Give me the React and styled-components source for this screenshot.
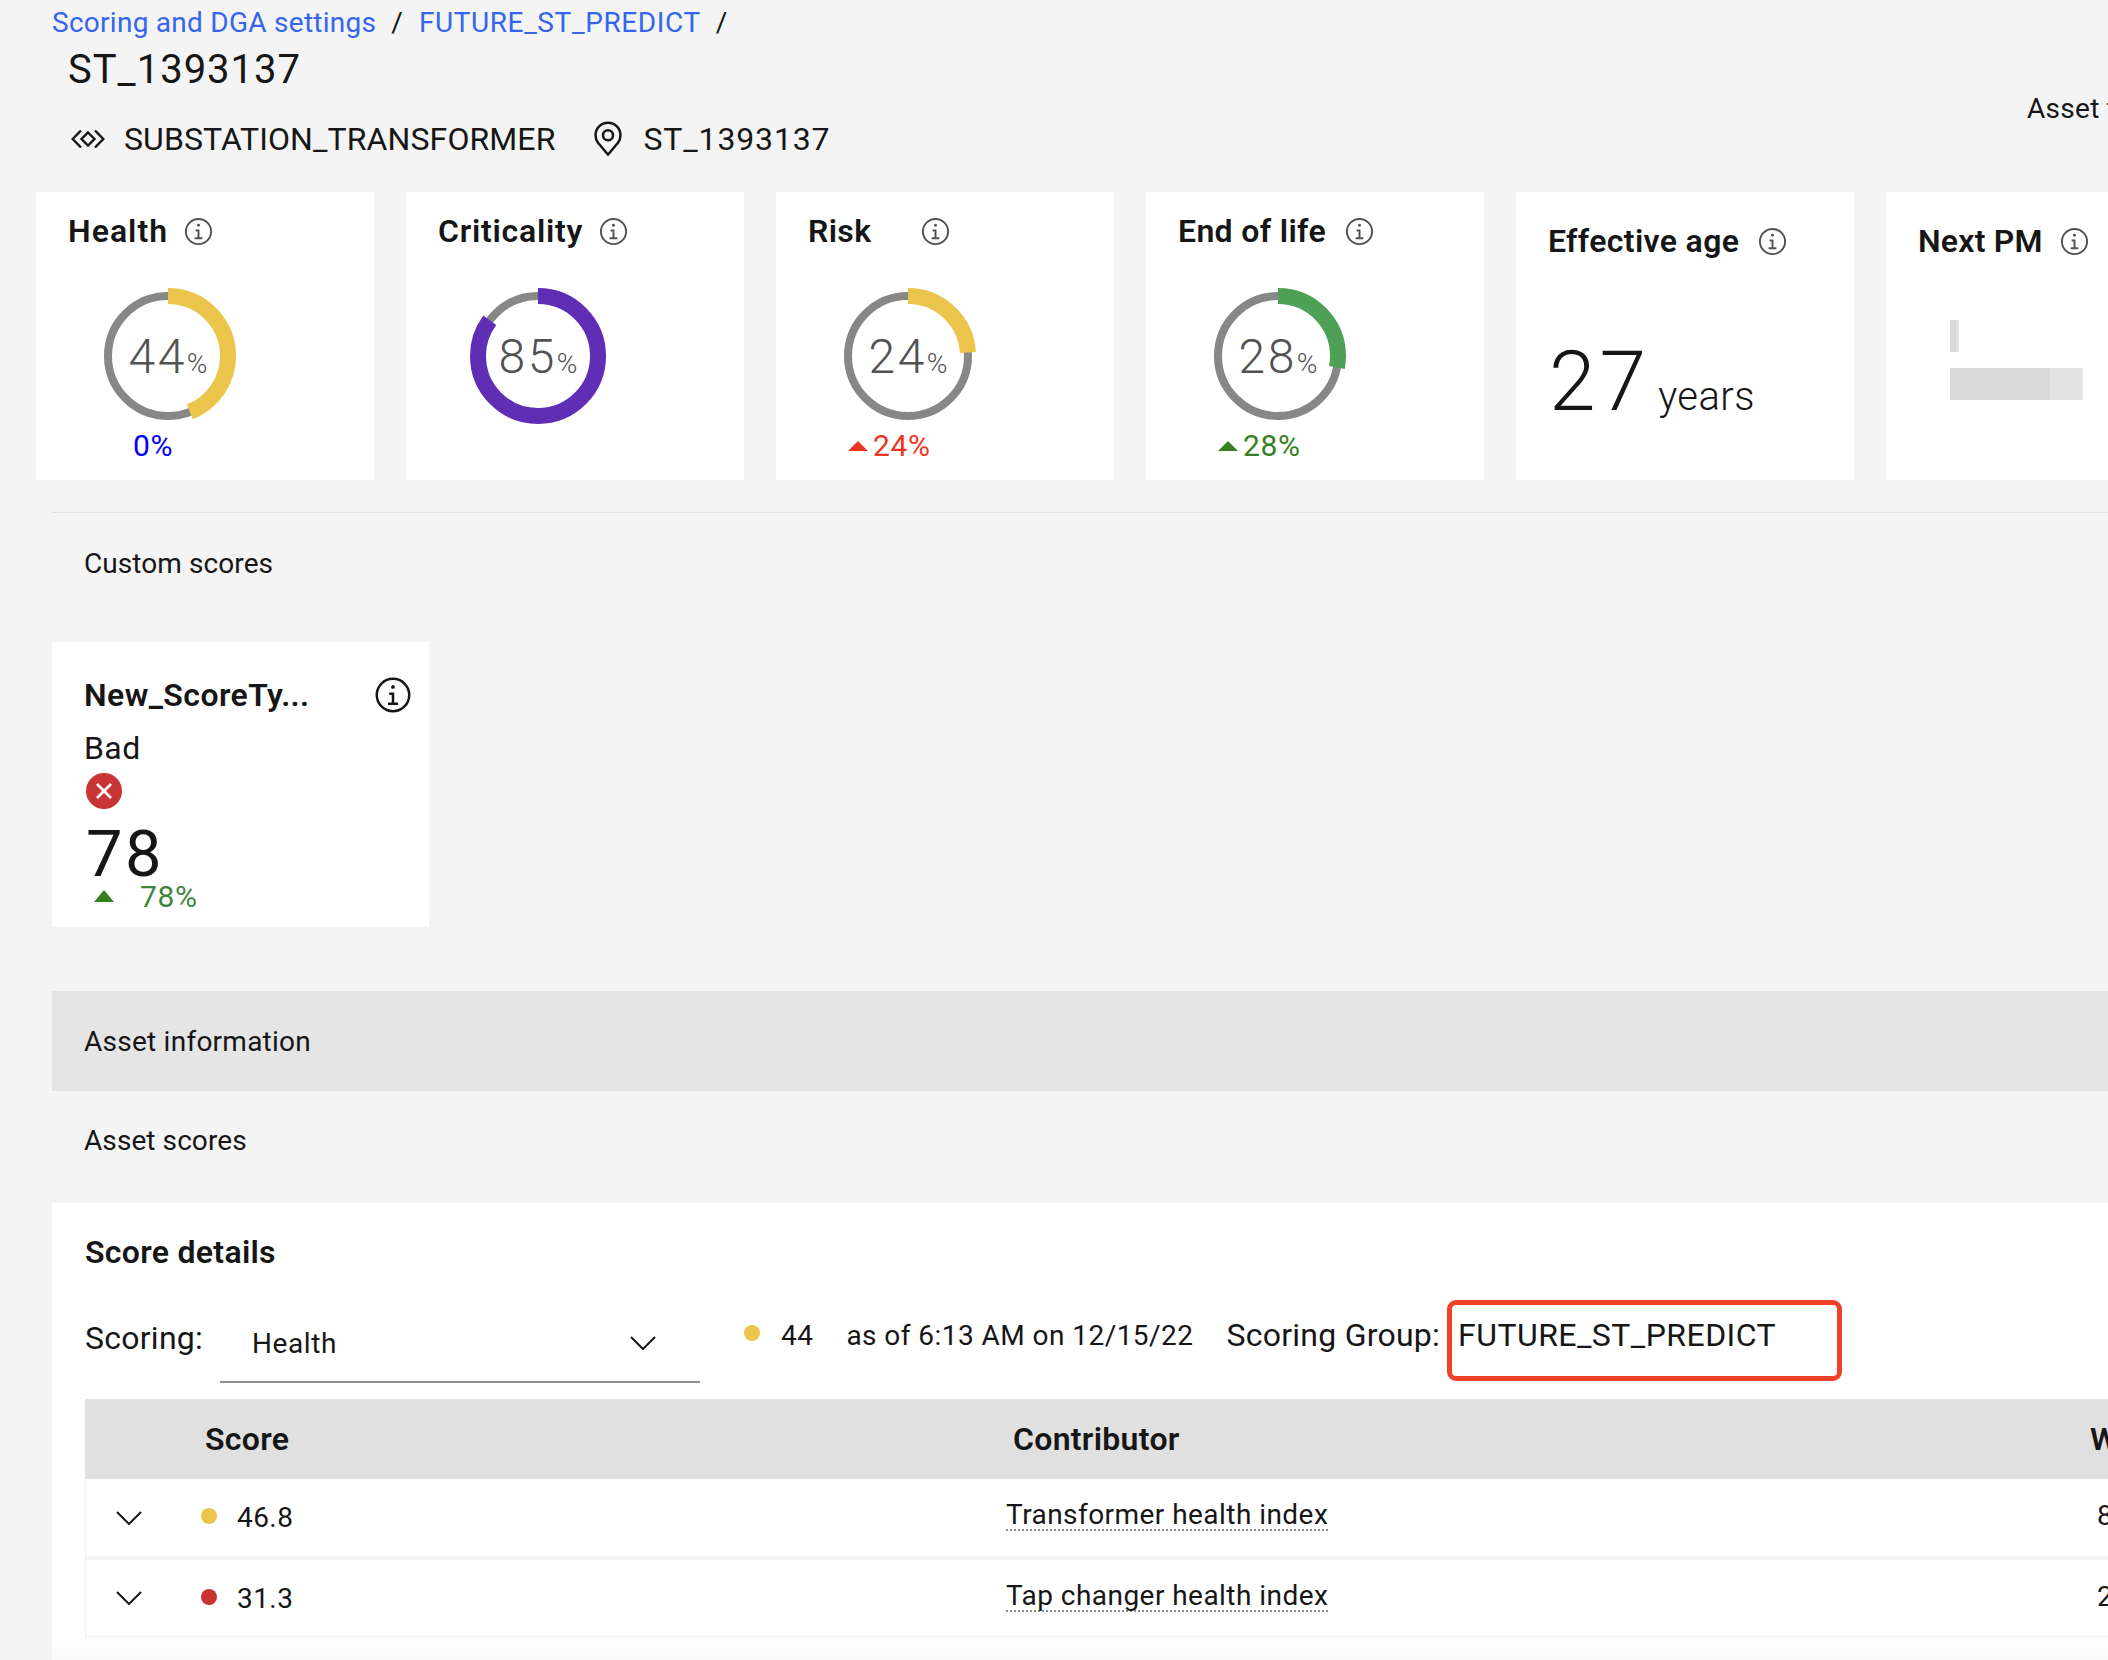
import React from 'react';
import styled, { createGlobalStyle } from 'styled-components';

const GlobalStyle = createGlobalStyle`
  html, body {
    margin: 0;
    padding: 0;
    background: #f4f4f4;
  }
  body {
    font-family: "Roboto", "Liberation Sans", sans-serif;
    color: #161616;
  }
`;

const Page = styled.div`
  width: 2108px;
  height: 1660px;
  overflow: hidden;
  display: flex;
  flex-direction: column;
  background: #f4f4f4;
`;

const Header = styled.header`
  height: 192px;
  flex: none;
  display: flex;
  justify-content: space-between;
`;

const HeaderLeft = styled.div`
  padding-left: 52px;
`;

const Breadcrumb = styled.nav`
  height: 44px;
  display: flex;
  align-items: center;
  font-size: 28px;
  white-space: nowrap;
`;

const Crumb = styled.a`
  color: #3565f0;
  letter-spacing: ${({ $wide }) => ($wide ? '0.6px' : '0.27px')};
`;

const Slash = styled.span`
  margin: 0 16px 0 15px;
`;

const Title = styled.h1`
  margin: 1px 0 0 16px;
  height: 50px;
  line-height: 50px;
  font-size: 40px;
  font-weight: 400;
  letter-spacing: 1px;
`;

const Meta = styled.div`
  margin: 22px 0 0 19px;
  height: 44px;
  display: flex;
  align-items: center;
  font-size: 32px;
  white-space: nowrap;
  letter-spacing: 0.1px;
`;

const MetaCode = styled.span`
  letter-spacing: 0.85px;
`;

const AssetIcon = styled.svg`
  width: 34px;
  height: 20px;
  margin-right: 19px;
  flex: none;
`;

const PinIcon = styled.svg`
  width: 40px;
  height: 40px;
  margin: 0 15px 0 33px;
  flex: none;
`;

const AssetLink = styled.div`
  width: 81px;
  margin-top: 91px;
  height: 36px;
  line-height: 36px;
  font-size: 28px;
  letter-spacing: 0.3px;
  overflow: hidden;
  white-space: nowrap;
`;

const CardRow = styled.section`
  flex: none;
  display: flex;
  gap: 32px;
  padding-left: 36px;
`;

const Card = styled.article`
  flex: none;
  width: 338px;
  height: 288px;
  box-sizing: border-box;
  padding: ${({ $low }) => ($low ? '32px' : '22px')} 0 0 32px;
  background: #fff;
`;

const CardTitle = styled.div`
  height: 34px;
  display: flex;
  align-items: center;
  gap: ${({ $gap }) => $gap}px;
  font-size: 32px;
  font-weight: 600;
  letter-spacing: ${({ $spacing = 0.35 }) => $spacing}px;
  white-space: nowrap;
`;

const Info = styled.svg`
  flex: none;
  display: block;
  width: ${({ $size }) => $size}px;
  height: ${({ $size }) => $size}px;
  fill: ${({ $color }) => $color};
`;

const GaugeSvg = styled.svg`
  display: block;
  width: 160px;
  height: 160px;
  margin: 28px 0 0 20px;
`;

const GaugeValue = styled.text`
  font-family: "Roboto", "Liberation Sans", sans-serif;
  font-size: 48px;
  font-weight: 300;
  letter-spacing: 2.5px;
  fill: #525252;
  text-anchor: middle;
`;

const Trend = styled.div`
  height: 20px;
  margin: 0 0 0 40px;
  display: flex;
  align-items: center;
  gap: 5px;
  font-size: 30px;
  line-height: 20px;
  letter-spacing: 0.6px;
  color: ${({ $color }) => $color};
`;

const Triangle = styled.span`
  flex: none;
  width: 0;
  height: 0;
  border-left: 10px solid transparent;
  border-right: 10px solid transparent;
  border-bottom: ${({ $height = 10 }) => $height}px solid ${({ $color }) => $color};
`;

const Spacer = styled.span`
  flex: none;
  width: 20px;
`;

const AgeValue = styled.div`
  margin-top: 74px;
  display: flex;
  align-items: baseline;
  gap: 8px;
  height: 100px;
  line-height: 100px;
`;

const AgeNumber = styled.span`
  font-size: 84px;
  font-weight: 300;
  letter-spacing: 4px;
  margin-left: 1px;
`;

const AgeUnit = styled.span`
  font-size: 40px;
  font-weight: 300;
  letter-spacing: 0.4px;
`;

const Skeleton = styled.div`
  height: 32px;
  width: ${({ $width }) => $width}px;
  margin: ${({ $top }) => $top}px 0 0 32px;
  background: linear-gradient(to right, #dadada 75%, #e3e3e3 75%);
`;

const Divider = styled.hr`
  flex: none;
  margin: 32px 0 0 52px;
  height: 1px;
  border: 0;
  background: #e0e0e0;
`;

const SectionLabel = styled.div`
  flex: none;
  height: ${({ $height }) => $height}px;
  padding-left: ${({ $shaded }) => ($shaded ? '32px' : '84px')};
  margin-left: ${({ $shaded }) => ($shaded ? '52px' : '0')};
  margin-top: ${({ $shaded }) => ($shaded ? '64px' : '0')};
  display: flex;
  align-items: center;
  font-size: 28px;
  letter-spacing: ${({ $shaded }) => ($shaded ? '0.25px' : '0.08px')};
  background: ${({ $shaded }) => ($shaded ? '#e5e5e5' : 'transparent')};
`;

const ScoreCard = styled.article`
  flex: none;
  width: 377px;
  height: 285px;
  box-sizing: border-box;
  margin: 29px 0 0 52px;
  padding: 33px 0 0 32px;
  background: #fff;
`;

const ScoreCardTop = styled.div`
  height: 40px;
  display: flex;
  align-items: center;
  justify-content: space-between;
  padding-right: 16px;
`;

const ScoreCardName = styled.div`
  font-size: 32px;
  font-weight: 600;
  letter-spacing: 0.4px;
`;

const ScoreCardStatus = styled.div`
  margin-top: 13px;
  height: 40px;
  line-height: 40px;
  font-size: 32px;
  letter-spacing: 0.4px;
`;

const ErrorIcon = styled.svg`
  display: block;
  width: 36px;
  height: 36px;
  margin: 5px 0 0 2px;
`;

const ScoreCardValue = styled.div`
  height: 58px;
  line-height: 58px;
  margin: 16px 0 0 2px;
  font-size: 65px;
  font-weight: 400;
  letter-spacing: 2.5px;
`;

const ScoreCardTrend = styled.div`
  display: flex;
  align-items: center;
  gap: 26px;
  margin: -1px 0 0 10px;
  height: 28px;
  font-size: 30px;
  letter-spacing: 0.7px;
  color: #3e8540;
`;

const Panel = styled.section`
  flex: 1;
  margin: 14px 0 0 52px;
  padding: 29px 0 0 33px;
  background: linear-gradient(to bottom, #fff 0, #fff 435px, #fafafa 100%);
  overflow: hidden;
`;

const PanelTitle = styled.h2`
  margin: 0;
  height: 40px;
  line-height: 40px;
  font-size: 32px;
  font-weight: 600;
  letter-spacing: 0.3px;
`;

const Controls = styled.div`
  margin: 28px 0 16px;
  height: 83px;
  display: flex;
  align-items: flex-start;
  white-space: nowrap;
`;

const ControlText = styled.span`
  flex: none;
  height: 40px;
  line-height: 40px;
  font-size: ${({ $big }) => ($big ? '32px' : '28px')};
  letter-spacing: ${({ $big }) => ($big ? '0.25px' : '0.45px')};
  margin-top: ${({ $top }) => $top ?? 16}px;
  margin-left: ${({ $left }) => $left}px;
`;

const Select = styled.div`
  flex: none;
  width: 480px;
  height: 83px;
  box-sizing: border-box;
  margin-left: 17px;
  padding: 24px 44px 0 32px;
  border-bottom: 2px solid #8d8d8d;
  display: flex;
  align-items: flex-start;
  justify-content: space-between;
  font-size: 28px;
  line-height: 40px;
  letter-spacing: 0.6px;
`;

const Chevron = styled.svg`
  flex: none;
  width: 26px;
  height: 14px;
  fill: none;
  stroke: #161616;
  stroke-width: 2;
`;

const SelectChevron = styled(Chevron)`
  margin-top: 12px;
`;

const Dot = styled.span`
  flex: none;
  width: 16px;
  height: 16px;
  border-radius: 50%;
  background: ${({ $color }) => $color};
`;

const ControlDot = styled(Dot)`
  margin: 25px 0 0 44px;
`;

const GroupValue = styled.span`
  position: relative;
  flex: none;
  height: 40px;
  line-height: 40px;
  margin: 15px 0 0 18px;
  font-size: 32px;
  letter-spacing: 0.45px;
`;

const Highlight = styled.span`
  position: absolute;
  left: -11px;
  top: -15px;
  width: 395px;
  height: 81px;
  box-sizing: border-box;
  border: 5px solid #ee4328;
  border-radius: 9px;
`;

const HeaderRow = styled.div`
  display: grid;
  grid-template-columns: 116px 805px 1084px 100px;
  height: 80px;
  align-items: center;
  background: #e0e0e0;
  font-size: 32px;
  font-weight: 600;
  letter-spacing: 0.3px;
`;

const HeaderCell = styled.span`
  padding-left: ${({ $pad }) => $pad}px;
  white-space: nowrap;
`;

const Row = styled.div`
  display: grid;
  grid-template-columns: 115px 805px 1084px 100px;
  height: ${({ $last }) => ($last ? '76px' : '77px')};
  align-items: center;
  background: #fff;
  border-left: 1px solid #f0f0f0;
  border-bottom: ${({ $last }) => ($last ? '1px solid #eee' : '4px solid #f4f4f4')};
  font-size: 28px;
  letter-spacing: 0.45px;
`;

const ExpandCell = styled.span`
  display: flex;
  padding-left: 30px;
`;

const ScoreCell = styled.span`
  display: flex;
  align-items: center;
  gap: 20px;
`;

const ScoreDot = styled(Dot)`
  margin-top: -3px;
`;

const Contributor = styled.span`
  justify-self: start;
  margin-bottom: 3px;
  line-height: 28px;
  border-bottom: 2px dotted #8d8d8d;
  white-space: nowrap;
`;

const Weight = styled.span`
  padding-left: 7px;
  margin-bottom: 4px;
`;

const INFO_RING = 'M16,4A12,12,0,1,1,4,16,12,12,0,0,1,16,4m0-2A14,14,0,1,0,30,16,14,14,0,0,0,16,2Z';
const INFO_STEM = '17 22 17 14 13 14 13 16 15 16 15 22 12 22 12 24 20 24 20 22 17 22';
const INFO_DOT = 'M16,8a1.5,1.5,0,1,0,1.5,1.5A1.5,1.5,0,0,0,16,8Z';

const InfoIcon = ({ size = 31, color = '#525252' }) => (
  <Info viewBox="0 0 32 32" $size={size} $color={color}>
    <polygon points={INFO_STEM} />
    <path d={INFO_DOT} />
    <path d={INFO_RING} />
  </Info>
);

const ChevronDown = ({ as: Comp = Chevron }) => (
  <Comp viewBox="0 0 26 14">
    <polyline points="1,1 13,13 25,1" />
  </Comp>
);

const Gauge = ({ value, color }) => {
  const radius = 60;
  const circumference = 2 * Math.PI * radius;
  const filled = (value / 100) * circumference;

  return (
    <GaugeSvg viewBox="0 0 160 160">
      <circle cx="80" cy="80" r={radius} fill="none" stroke="#878787" strokeWidth="8" />
      <circle
        cx="80"
        cy="80"
        r={radius}
        fill="none"
        stroke={color}
        strokeWidth="16"
        strokeDasharray={`${filled} ${circumference - filled}`}
        transform="rotate(-90 80 80)"
      />
      <GaugeValue x="80" y="97">
        {value}
        <tspan fontSize="28" letterSpacing="0">%</tspan>
      </GaugeValue>
    </GaugeSvg>
  );
};

const gauges = [
  { title: 'Health', gap: 15, spacing: 1, value: 44, color: '#ebc44c', trend: '0%', trendColor: '#0000ff' },
  { title: 'Criticality', gap: 15, spacing: 0.75, value: 85, color: '#5f2eb5' },
  { title: 'Risk', gap: 49, value: 24, color: '#ebc44c', trend: '24%', trendColor: '#ee3524', up: true },
  { title: 'End of life', gap: 18, value: 28, color: '#4fa057', trend: '28%', trendColor: '#37801f', up: true },
];

const rows = [
  { color: '#ebc44c', score: '46.8', name: 'Transformer health index', weight: '80' },
  { color: '#cb3333', score: '31.3', name: 'Tap changer health index', weight: '20', last: true },
];

const App = () => {
  return (
    <Page>
      <GlobalStyle />
      <Header>
        <HeaderLeft>
          <Breadcrumb>
            <Crumb>Scoring and DGA settings</Crumb>
            <Slash>/</Slash>
            <Crumb $wide>FUTURE_ST_PREDICT</Crumb>
            <Slash>/</Slash>
          </Breadcrumb>
          <Title>ST_1393137</Title>
          <Meta>
            <AssetIcon viewBox="0 0 34 20" fill="none" stroke="#161616" strokeWidth="2.4">
              <polyline points="10,1.5 1.7,10 10,18.5" />
              <polygon points="17,3.5 23.5,10 17,16.5 10.5,10" />
              <polyline points="24,1.5 32.3,10 24,18.5" />
            </AssetIcon>
            SUBSTATION_TRANSFORMER
            <PinIcon viewBox="0 0 32 32" fill="#161616">
              <path d="M16,18a5,5,0,1,1,5-5A5.0057,5.0057,0,0,1,16,18Zm0-8a3,3,0,1,0,3,3A3.0033,3.0033,0,0,0,16,10Z" />
              <path d="M16,30,7.5645,20.0513c-.0479-.0571-.3482-.4515-.3482-.4515A10.8888,10.8888,0,0,1,5,13a11,11,0,0,1,22,0,10.8844,10.8844,0,0,1-2.2148,6.5973l-.0015.0025s-.3.3944-.3447.4474ZM8.8125,18.395c.001.0007.2334.3082.2866.3744L16,26.9079l6.91-8.15c.0439-.0552.2783-.3649.2788-.3657A8.901,8.901,0,0,0,25,13,9,9,0,1,0,7,13a8.9054,8.9054,0,0,0,1.8125,5.395Z" />
            </PinIcon>
            <MetaCode>ST_1393137</MetaCode>
          </Meta>
        </HeaderLeft>
        <AssetLink>Asset type</AssetLink>
      </Header>

      <CardRow>
        {gauges.map((g) => (
          <Card key={g.title}>
            <CardTitle $gap={g.gap} $spacing={g.spacing}>
              {g.title}
              <InfoIcon />
            </CardTitle>
            <Gauge value={g.value} color={g.color} />
            {g.trend && (
              <Trend $color={g.trendColor}>
                {g.up ? <Triangle $color={g.trendColor} /> : <Spacer />}
                {g.trend}
              </Trend>
            )}
          </Card>
        ))}
        <Card $low>
          <CardTitle $gap={18}>
            Effective age
            <InfoIcon />
          </CardTitle>
          <AgeValue>
            <AgeNumber>27</AgeNumber>
            <AgeUnit>years</AgeUnit>
          </AgeValue>
        </Card>
        <Card $low>
          <CardTitle $gap={16} $spacing={0.2}>
            Next PM
            <InfoIcon />
          </CardTitle>
          <Skeleton $width={9} $top={62} />
          <Skeleton $width={133} $top={16} />
        </Card>
      </CardRow>

      <Divider />
      <SectionLabel $height={100}>Custom scores</SectionLabel>

      <ScoreCard>
        <ScoreCardTop>
          <ScoreCardName>New_ScoreTy...</ScoreCardName>
          <InfoIcon size={40} color="#161616" />
        </ScoreCardTop>
        <ScoreCardStatus>Bad</ScoreCardStatus>
        <ErrorIcon viewBox="0 0 36 36">
          <circle cx="18" cy="18" r="18" fill="#c93434" />
          <path d="M11 11 L25 25 M25 11 L11 25" stroke="#fff" strokeWidth="2.6" />
        </ErrorIcon>
        <ScoreCardValue>78</ScoreCardValue>
        <ScoreCardTrend>
          <Triangle $color="#37801f" $height={12} />
          78%
        </ScoreCardTrend>
      </ScoreCard>

      <SectionLabel $height={100} $shaded>Asset information</SectionLabel>
      <SectionLabel $height={98}>Asset scores</SectionLabel>

      <Panel>
        <PanelTitle>Score details</PanelTitle>
        <Controls>
          <ControlText $big $top={18}>Scoring:</ControlText>
          <Select>
            Health
            <ChevronDown as={SelectChevron} />
          </Select>
          <ControlDot $color="#ebc44c" />
          <ControlText $left={21}>44</ControlText>
          <ControlText $left={33}>as of 6:13 AM on 12/15/22</ControlText>
          <ControlText $big $left={33} $top={15}>Scoring Group:</ControlText>
          <GroupValue>
            FUTURE_ST_PREDICT
            <Highlight />
          </GroupValue>
        </Controls>
        <HeaderRow>
          <span />
          <HeaderCell $pad={4}>Score</HeaderCell>
          <HeaderCell $pad={7}>Contributor</HeaderCell>
          <HeaderCell $pad={0}>Weight</HeaderCell>
        </HeaderRow>
        {rows.map((row) => (
          <Row key={row.name} $last={row.last}>
            <ExpandCell>
              <ChevronDown />
            </ExpandCell>
            <ScoreCell>
              <ScoreDot $color={row.color} />
              {row.score}
            </ScoreCell>
            <Contributor>{row.name}</Contributor>
            <Weight>{row.weight}</Weight>
          </Row>
        ))}
      </Panel>
    </Page>
  );
};

export default App;
